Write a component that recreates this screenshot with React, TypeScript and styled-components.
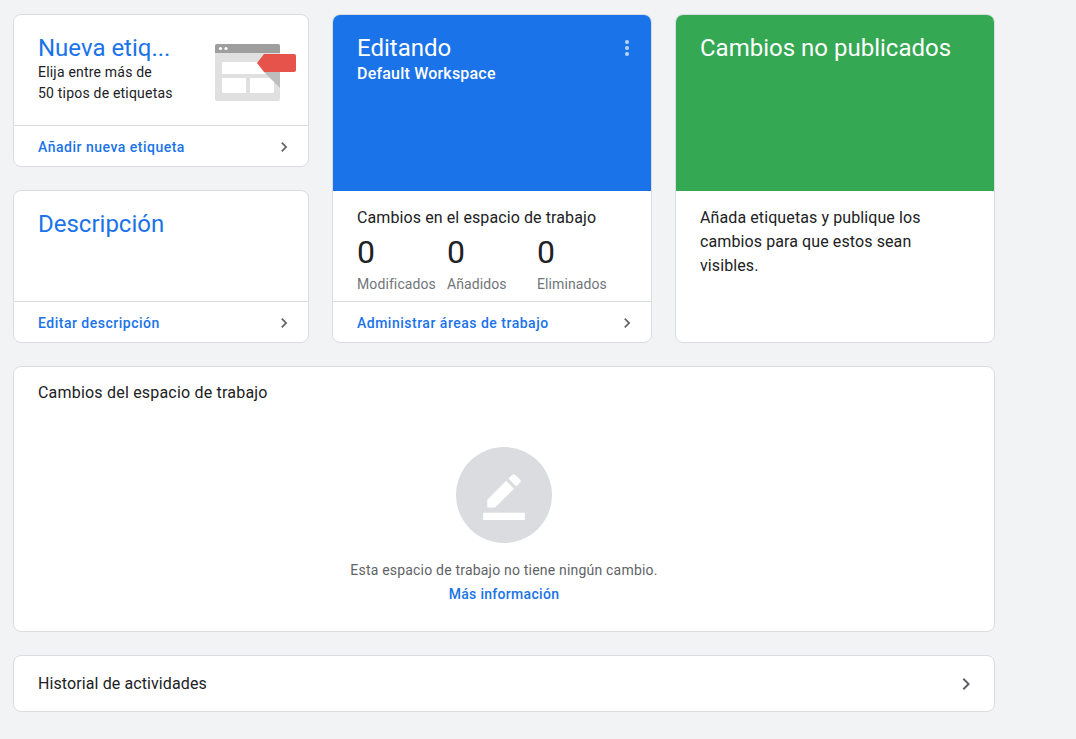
import styled, { createGlobalStyle } from "styled-components"

const GlobalStyle = createGlobalStyle`
  html, body {
    margin: 0;
    background: #f1f3f4;
    font-family: Roboto, "Liberation Sans", Arial, sans-serif;
    color: #202124;
  }
  * { box-sizing: border-box; }
`

const Page = styled.main`
  padding: 14px 0 0 13px;
  width: 995px;
`

const TopGrid = styled.section`
  display: grid;
  grid-template-columns: 296px 320px 320px;
  grid-template-rows: 153px 153px;
  column-gap: 23px;
  row-gap: 23px;
`

const Card = styled.div<{ $span?: number }>`
  display: flex;
  flex-direction: column;
  background: #fff;
  border: 1px solid #dadce0;
  border-radius: 8px;
  overflow: hidden;
  grid-row: span ${(p) => p.$span ?? 1};
`

const CardTop = styled.div`
  flex: 1;
  display: flex;
  padding: 17px 11px 0 24px;
`

const TextCol = styled.div`
  flex: 1;
  min-width: 0;
`

const Title = styled.h2<{ $light?: boolean }>`
  margin: 0;
  font-size: 24px;
  font-weight: 400;
  line-height: 32px;
  color: ${(p) => (p.$light ? "#fff" : "#1a73e8")};
  white-space: nowrap;
`

const Blurb = styled.p`
  margin: -2px 0 0;
  font-size: 14px;
  line-height: 21px;
  letter-spacing: 0.2px;
  color: #202124;
`

const TagArt = styled.svg`
  flex: none;
  margin-top: 12px;
`

const Footer = styled.a`
  height: 41px;
  flex: none;
  display: flex;
  align-items: center;
  justify-content: space-between;
  padding: 1px 14px 0 24px;
  border-top: 1px solid #dadce0;
  font-size: 14px;
  font-weight: 500;
  color: #1a73e8;
  text-decoration: none;
  letter-spacing: 0.5px;
`

const Hero = styled.div<{ $bg: string }>`
  height: 176px;
  flex: none;
  display: flex;
  justify-content: space-between;
  align-items: flex-start;
  padding: 17px 12px 0 24px;
  background: ${(p) => p.$bg};
  color: #fff;
`

const Subtitle = styled.div`
  font-size: 16px;
  font-weight: 500;
  line-height: 22px;
  letter-spacing: 0.2px;
  margin-top: -1px;
`

const MoreButton = styled.button`
  border: 0;
  background: none;
  padding: 0;
  margin-top: 4px;
  display: flex;
  color: rgba(255, 255, 255, 0.7);
`

const CardBody = styled.div`
  flex: 1;
  padding: 15px 24px 0;
  font-size: 16px;
  line-height: 24px;
  letter-spacing: 0.1px;
`

const Stats = styled.div`
  display: flex;
  margin-top: 4px;
`

const Stat = styled.div`
  width: 90px;
`

const StatNum = styled.div`
  font-size: 32px;
  line-height: 36px;
  color: #202124;
`

const StatLabel = styled.div`
  margin-top: 4px;
  font-size: 14px;
  line-height: 20px;
  color: #70757a;
`

const Panel = styled.section<{ $height: number }>`
  margin-top: 23px;
  width: 982px;
  height: ${(p) => p.$height}px;
  background: #fff;
  border: 1px solid #dadce0;
  border-radius: 8px;
`

const PanelHead = styled.h3`
  margin: 0;
  padding: 14px 24px 0;
  font-size: 16px;
  font-weight: 400;
  line-height: 24px;
  letter-spacing: 0.2px;
`

const Empty = styled.div`
  display: flex;
  flex-direction: column;
  align-items: center;
  margin-top: 42px;
`

const Bubble = styled.div`
  width: 96px;
  height: 96px;
  border-radius: 50%;
  background: #dadce0;
  display: flex;
  align-items: center;
  justify-content: center;
  color: #fff;
`

const EmptyText = styled.div`
  margin-top: 17px;
  font-size: 14px;
  line-height: 20px;
  letter-spacing: 0.2px;
  color: #5f6368;
`

const EmptyLink = styled.a`
  margin-top: 4px;
  font-size: 14px;
  font-weight: 500;
  line-height: 20px;
  letter-spacing: 0.3px;
  color: #1a73e8;
  text-decoration: none;
`

const HistoryRow = styled.div`
  height: 100%;
  display: flex;
  align-items: center;
  justify-content: space-between;
  padding: 0 16px 0 24px;
  font-size: 16px;
  letter-spacing: 0.1px;
`

function Chevron({ size = 20 }: { size?: number }) {
  return (
    <svg width={size} height={size} viewBox="0 0 24 24" fill="#5f6368">
      <path d="M10 6L8.59 7.41 13.17 12l-4.58 4.59L10 18l6-6z" />
    </svg>
  )
}

function TagIllustration() {
  return (
    <TagArt width="82" height="58" viewBox="0 0 82 58">
      <rect x="0" y="0" width="65" height="57" rx="2" fill="#e0e0e0" />
      <path d="M2 0h61a2 2 0 0 1 2 2v7H0V2a2 2 0 0 1 2-2z" fill="#9e9e9e" />
      <circle cx="5.5" cy="4.5" r="1.6" fill="#fff" />
      <circle cx="11" cy="4.5" r="1.6" fill="#fff" />
      <rect x="7" y="18" width="51" height="12" fill="#fff" />
      <rect x="7" y="34" width="24" height="15" fill="#fff" />
      <rect x="35" y="34" width="24" height="15" fill="#fff" />
      <polygon points="49,28 65,28 65,44" fill="#bdbdbd" />
      <path d="M42 19 L49 10 H79 a2 2 0 0 1 2 2 V26 a2 2 0 0 1 -2 2 H49 Z" fill="#e5534b" />
    </TagArt>
  )
}

export default function App() {
  return (
    <>
      <GlobalStyle />
      <Page>
        <TopGrid>
          <Card>
            <CardTop>
              <TextCol>
                <Title title="Nueva etiqueta">Nueva etiq...</Title>
                <Blurb>
                  Elija entre más de
                  <br />
                  50 tipos de etiquetas
                </Blurb>
              </TextCol>
              <TagIllustration />
            </CardTop>
            <Footer href="#">
              Añadir nueva etiqueta
              <Chevron />
            </Footer>
          </Card>

          <Card $span={2}>
            <Hero $bg="#1a73e8">
              <div>
                <Title $light>Editando</Title>
                <Subtitle>Default Workspace</Subtitle>
              </div>
              <MoreButton aria-label="Más opciones">
                <svg width="24" height="24" viewBox="0 0 24 24" fill="currentColor">
                  <circle cx="12" cy="6" r="2" />
                  <circle cx="12" cy="12" r="2" />
                  <circle cx="12" cy="18" r="2" />
                </svg>
              </MoreButton>
            </Hero>
            <CardBody>
              Cambios en el espacio de trabajo
              <Stats>
                <Stat>
                  <StatNum>0</StatNum>
                  <StatLabel>Modificados</StatLabel>
                </Stat>
                <Stat>
                  <StatNum>0</StatNum>
                  <StatLabel>Añadidos</StatLabel>
                </Stat>
                <Stat>
                  <StatNum>0</StatNum>
                  <StatLabel>Eliminados</StatLabel>
                </Stat>
              </Stats>
            </CardBody>
            <Footer href="#">
              Administrar áreas de trabajo
              <Chevron />
            </Footer>
          </Card>

          <Card $span={2}>
            <Hero $bg="#34a853">
              <Title $light>Cambios no publicados</Title>
            </Hero>
            <CardBody>
              Añada etiquetas y publique los
              <br />
              cambios para que estos sean
              <br />
              visibles.
            </CardBody>
          </Card>

          <Card>
            <CardTop>
              <TextCol>
                <Title>Descripción</Title>
              </TextCol>
            </CardTop>
            <Footer href="#">
              Editar descripción
              <Chevron />
            </Footer>
          </Card>
        </TopGrid>

        <Panel $height={266}>
          <PanelHead>Cambios del espacio de trabajo</PanelHead>
          <Empty>
            <Bubble>
              <svg width="50" height="50" viewBox="0 0 24 24" fill="currentColor">
                <path d="M22 24H2v-3.5h20V24zM13.06 5.19l3.75 3.75L7.75 18H4v-3.75l9.06-9.06zm4.82 2.68-3.75-3.75 1.83-1.83c.39-.39 1.02-.39 1.41 0l2.34 2.34c.39.39.39 1.02 0 1.41l-1.83 1.83z" />
              </svg>
            </Bubble>
            <EmptyText>Esta espacio de trabajo no tiene ningún cambio.</EmptyText>
            <EmptyLink href="#">Más información</EmptyLink>
          </Empty>
        </Panel>

        <Panel $height={57}>
          <HistoryRow>
            Historial de actividades
            <Chevron size={24} />
          </HistoryRow>
        </Panel>
      </Page>
    </>
  )
}
